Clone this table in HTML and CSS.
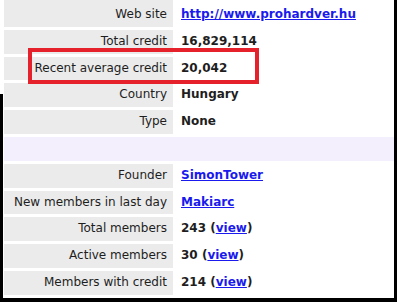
FILE: index.html
```html
<!DOCTYPE html>
<html>
<head>
<meta charset="utf-8">
<link rel="stylesheet" href="styles.css">
</head>
<body>
<div class="frame">
  <table class="info">
    <tr class="first"><td class="lbl">Web site</td><td class="val"><a href="#">http://www.prohardver.hu</a></td></tr>
    <tr><td class="lbl">Total credit</td><td class="val">16,829,114</td></tr>
    <tr><td class="lbl">Recent average credit</td><td class="val">20,042</td></tr>
    <tr><td class="lbl">Country</td><td class="val">Hungary</td></tr>
    <tr><td class="lbl">Type</td><td class="val">None</td></tr>
    <tr class="sep"><td colspan="2">&nbsp;</td></tr>
    <tr><td class="lbl">Founder</td><td class="val"><a href="#">SimonTower</a></td></tr>
    <tr><td class="lbl">New members in last day</td><td class="val"><a href="#">Makiarc</a></td></tr>
    <tr><td class="lbl">Total members</td><td class="val">243 (<a href="#">view</a>)</td></tr>
    <tr><td class="lbl">Active members</td><td class="val">30 (<a href="#">view</a>)</td></tr>
    <tr><td class="lbl">Members with credit</td><td class="val">214 (<a href="#">view</a>)</td></tr>
  </table>
  <div class="highlight"></div>
</div>
</body>
</html>
```

FILE: styles.css
```css
html, body {
  margin: 0;
  padding: 0;
  background: #ffffff;
}
body {
  width: 400px;
  height: 304px;
  overflow: hidden;
  font-family: "DejaVu Sans", Verdana, sans-serif;
  font-size: 12px;
  color: #1e1e1e;
}
.frame {
  position: relative;
  width: 394px;
  padding-bottom: 0;
  border-right: 3px solid #000;
  border-bottom: 4px solid #000;
}
.frame::before {
  content: "";
  position: absolute;
  left: 0;
  top: 97px;
  bottom: -4px;
  width: 3px;
  background: #000;
}
.info {
  border-collapse: separate;
  border-spacing: 3px;
  margin: -3px -3px 0 1px;
  width: 396px;
}
.info td {
  height: 15.8px;
  line-height: 15.8px;
  padding: 4px 6px 4px 5px;
  white-space: nowrap;
}
.info .first td {
  padding-top: 7px;
}
.lbl {
  background: #ebebeb;
  text-align: right;
  width: 158px;
}
.val {
  font-weight: bold;
  text-align: left;
}
.val a {
  color: #1a1aee;
  text-decoration: underline;
}
.sep td {
  background: #f3effd;
}
.highlight {
  position: absolute;
  left: 28px;
  top: 51px;
  width: 223px;
  height: 28px;
  border: 4px solid #e5222b;
}
```
